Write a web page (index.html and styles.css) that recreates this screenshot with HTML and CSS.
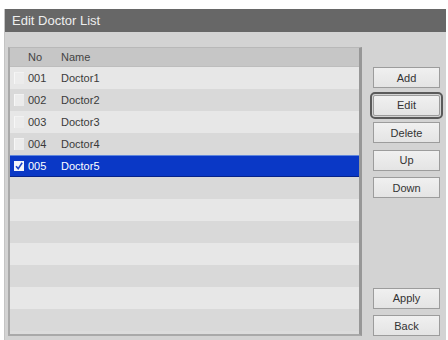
FILE: index.html
```html
<!DOCTYPE html>
<html lang="en">
<head>
  <meta charset="UTF-8">
  <title>Edit Doctor List</title>
  <link rel="stylesheet" href="styles.css">
</head>
<body>
  <div class="dialog">
    <div class="titlebar">Edit Doctor List</div>
    <div class="content">
      <div class="list">
        <div class="row head">
          <span class="chk-col"></span>
          <span class="no">No</span>
          <span class="name">Name</span>
        </div>
        <div class="row"><span class="chk-col"><span class="box"></span></span><span class="no">001</span><span class="name">Doctor1</span></div>
        <div class="row alt"><span class="chk-col"><span class="box"></span></span><span class="no">002</span><span class="name">Doctor2</span></div>
        <div class="row"><span class="chk-col"><span class="box"></span></span><span class="no">003</span><span class="name">Doctor3</span></div>
        <div class="row alt"><span class="chk-col"><span class="box"></span></span><span class="no">004</span><span class="name">Doctor4</span></div>
        <div class="row selected">
          <span class="chk-col">
            <svg class="checked" width="10" height="10" viewBox="0 0 10 10">
              <rect x="0" y="0" width="10" height="10" fill="#f4f6fb"/>
              <path d="M2 5.2 L4.2 7.6 L8.2 1.8" fill="none" stroke="#1d46c8" stroke-width="1.6"/>
            </svg>
          </span>
          <span class="no">005</span><span class="name">Doctor5</span>
        </div>
        <div class="row alt"></div>
        <div class="row"></div>
        <div class="row alt"></div>
        <div class="row"></div>
        <div class="row alt"></div>
        <div class="row"></div>
        <div class="row alt"></div>
      </div>
      <div class="actions">
        <button class="btn">Add</button>
        <button class="btn focused">Edit</button>
        <button class="btn">Delete</button>
        <button class="btn">Up</button>
        <button class="btn">Down</button>
        <div class="spacer"></div>
        <button class="btn">Apply</button>
        <button class="btn">Back</button>
      </div>
    </div>
  </div>
</body>
</html>
```

FILE: styles.css
```css
* {
  box-sizing: border-box;
}
body {
  margin: 0;
  background: #ffffff;
  font-family: "Liberation Sans", Arial, sans-serif;
  overflow: hidden;
}
.dialog {
  margin: 9px 2px 0 4px;
  height: 340px;
  background: #d3d3d3;
  border-left: 1px solid #c4c4c4;
}
.titlebar {
  height: 23px;
  line-height: 23px;
  padding-left: 7px;
  background: #676767;
  color: #eeeeee;
  font-size: 13px;
}
.content {
  display: flex;
  padding: 15px 0 0 3px;
  height: 305px;
}
.list {
  width: 354px;
  height: 289px;
  background: #dcdcdc;
  border-top: 1px solid #b8b8b8;
  border-left: 2px solid #a9a9a9;
  border-right: 3px solid #979797;
  border-bottom: 2px solid #a9a9a9;
}
.row {
  display: flex;
  align-items: center;
  height: 22px;
  background: #e7e7e7;
  font-size: 11px;
  color: #3a3a3a;
}
.row.alt {
  background: #d9d9d9;
}
.row.head {
  height: 19px;
  background: #c6c6c6;
  border-bottom: 1px solid #bdbdbd;
  color: #444444;
}
.chk-col {
  width: 18px;
  padding-left: 4px;
  display: flex;
  align-items: center;
}
.box {
  display: block;
  width: 10px;
  height: 12px;
  background: #ececec;
  border-left: 1px solid #f7f7f7;
  border-top: 1px solid #f2f2f2;
}
.no {
  width: 33px;
}
.row.selected {
  background: #0a38c6;
  color: #ffffff;
  border-top: 1px solid #5f86dc;
  border-bottom: 1px solid #06238a;
}
.checked {
  display: block;
}
.actions {
  display: flex;
  flex-direction: column;
  margin-left: 11px;
  padding-top: 20px;
  width: 67px;
  height: 289px;
}
.btn {
  height: 21px;
  margin: 0 0 6.5px 0;
  padding: 0;
  background: linear-gradient(#f0f0f0, #e4e4e4);
  border: 1px solid #9c9c9c;
  color: #333333;
  font-family: "Liberation Sans", Arial, sans-serif;
  font-size: 11px;
}
.btn.focused {
  outline: 2px solid #5a5a5a;
  outline-offset: 1px;
  border-radius: 2px;
}
.spacer {
  flex: 1;
}
.actions .btn:last-child {
  margin-bottom: 0;
}
```
